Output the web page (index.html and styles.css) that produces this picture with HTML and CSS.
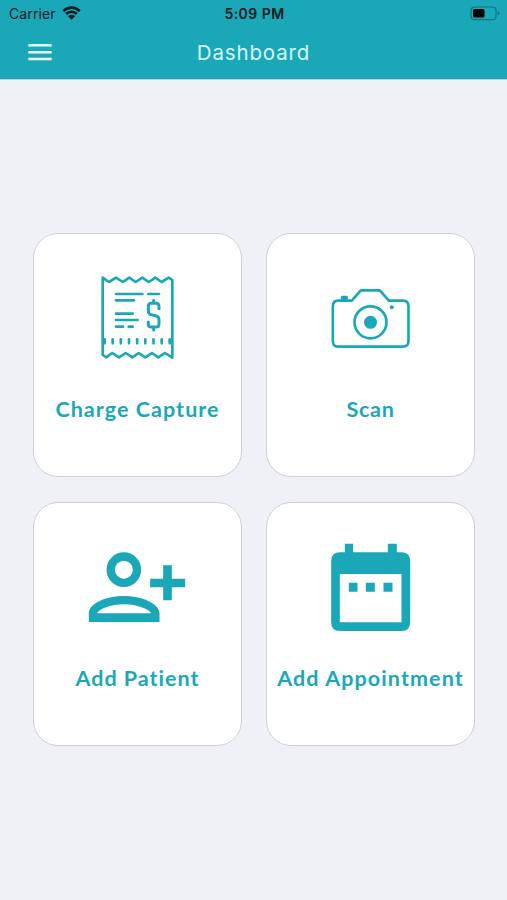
FILE: index.html
```html
<!DOCTYPE html>
<html lang="en">
<head>
    <meta charset="UTF-8">
    <meta name="viewport" content="width=device-width, initial-scale=1.0">
    <title>Dashboard</title>
    <link rel="stylesheet" href="styles.css">
</head>
<body>
    <header class="header">
        <div class="status-bar">
            <div class="carrier">
                <span class="carrier-name">Carrier</span>
                <svg class="wifi" viewBox="0 0 20 15">
                    <path d="M1.2 5.4a12.3 12.3 0 0 1 17.6 0M4.2 8.6a8.2 8.2 0 0 1 11.6 0" fill="none" stroke="#04191b" stroke-width="2.8"/>
                    <path d="M10 14.6L6.3 10.9a5.3 5.3 0 0 1 7.4 0z" fill="#04191b"/>
                </svg>
            </div>
            <span class="time">5:09 PM</span>
            <svg class="battery" viewBox="0 0 30 15">
                <rect x="1" y="1" width="25" height="12.6" rx="3.5" fill="none" stroke="#117580" stroke-width="1.2"/>
                <rect x="3" y="3" width="11.5" height="8.6" rx="1.5" fill="#000"/>
                <path d="M27.6 5v4.6q1.8-.7 1.8-2.3T27.6 5z" fill="#117580"/>
            </svg>
        </div>
        <div class="nav-bar">
            <svg class="menu" viewBox="0 0 24 17">
                <path d="M.3 1.3h23.4M.3 8.3h23.4M.3 15h23.4" stroke="#e8fdff" stroke-width="2.4"/>
            </svg>
            <h1 class="title">Dashboard</h1>
        </div>
    </header>

    <main class="grid">
        <div class="card">
            <svg class="icon" viewBox="-36 0 360 315">
                <g fill="none" stroke="#1aa8b9" stroke-width="8" stroke-linecap="round" stroke-linejoin="round">
                    <path d="M38 38L57 51 78 38 98 51 118 38 137 51 157 38 176 51 196 38 215 51 236 38 247 45V278L225 264 205 277 186 264 166 277 146 264 127 277 107 264 87 277 67 264 48 277 38 269z"/>
                    <path d="M78 87h79M175 87h32M78 106h54M78 146h50M78 165h65M78 185h21M116 185h12"/>
                    <path d="M207 131v-6q0-10-8-10h-16q-8 0-8 10v13q0 9 8 11l16 4q8 2 8 11v12q0 10-8 10h-16q-8 0-8-10v-5M191 106v8M191 187v8" stroke-width="9"/>
                </g>
                <path d="M44 223v12M68 223v12M92.5 223v12M117 223v12M141.5 223v12M166 223v12M190.5 223v12M215 223v12M239 223v12" stroke="#1aa8b9" stroke-width="8" stroke-linecap="round"/>
            </svg>
            <span class="label charge">Charge Capture</span>
        </div>
        <div class="card">
            <svg class="icon" viewBox="-26.5 -45 360 315">
                <g fill="none" stroke="#1aa8b9" stroke-width="8" stroke-linejoin="round">
                    <path d="M54 62h42l27-31h57l27 31h42q17 0 17 17v104q0 17-17 17H54q-15 0-15-17V79q0-17 15-17z"/>
                    <circle cx="152" cy="127" r="48"/>
                </g>
                <circle cx="152" cy="127" r="19.5" fill="#1aa8b9"/>
                <path d="M63 60v-9q0-4 4-4h13q4 0 4 4v9z" fill="#1aa8b9"/>
                <circle cx="216" cy="82" r="6" fill="#1aa8b9"/>
            </svg>
            <span class="label scan">Scan</span>
        </div>
        <div class="card">
            <svg class="icon" viewBox="-5.5 -18 360 315">
                <circle cx="132" cy="89" r="39.5" fill="none" stroke="#1aa8b9" stroke-width="25"/>
                <path d="M27 246v-26c0-30 52-52 105-52s107 22 107 52v26zM52 220h162c-8-13-42-27-82-27s-74 14-80 27z" fill="#1aa8b9" fill-rule="evenodd"/>
                <path d="M263 76v105M211 129h105" stroke="#1aa8b9" stroke-width="26"/>
            </svg>
            <span class="label patient">Add Patient</span>
        </div>
        <div class="card">
            <svg class="icon" viewBox="-26.5 -3 360 315">
                <path d="M75 26h25v26h104V26h27v26h14q26 0 26 26v184q0 26-26 26H60q-26 0-26-26V78q0-26 26-26h15zM60 117v145h185V117z" fill="#1aa8b9" fill-rule="evenodd"/>
                <path d="M87 143h26v27H87zM138 143h27v27h-27zM191 143h27v27h-27z" fill="#1aa8b9"/>
            </svg>
            <span class="label appointment">Add Appointment</span>
        </div>
    </main>
</body>
</html>
```
FILE: styles.css
```css
body {
    margin: 0;
    min-height: 900px;
    background-color: #eff1f7;
    font-family: Lato, sans-serif;
}
.header {
    height: 80px;
    box-sizing: border-box;
    background-color: #1aa8b9;
    border-bottom: 1px solid #a5dce5;
}
.status-bar {
    display: grid;
    grid-template-columns: 1fr auto 1fr;
    align-items: center;
    height: 27px;
    padding: 0 7px 0 9px;
    color: #04191b;
    font-family: Inter, sans-serif;
    font-size: 14px;
}
.carrier {
    display: flex;
    align-items: center;
    gap: 6px;
}
.carrier-name {
    letter-spacing: 0.1px;
}
.wifi {
    width: 19px;
    height: 14px;
    margin-top: -2px;
}
.time {
    font-weight: 600;
    letter-spacing: 0.45px;
}
.battery {
    width: 30px;
    height: 15px;
    justify-self: end;
}
.nav-bar {
    display: grid;
    grid-template-columns: 1fr auto 1fr;
    align-items: center;
    height: 50px;
    padding: 0 28px;
}
.menu {
    width: 24px;
    height: 17px;
}
.title {
    margin: 0;
    color: #d6f6f9;
    font-family: Inter, sans-serif;
    font-size: 20.5px;
    font-weight: 400;
    letter-spacing: 0.85px;
}
.grid {
    display: grid;
    grid-template-columns: 209px 209px;
    grid-auto-rows: 244px;
    gap: 25px 24px;
    padding: 153px 0 0 33px;
}
.card {
    display: flex;
    flex-direction: column;
    align-items: center;
    box-sizing: border-box;
    padding-top: 31px;
    background-color: #fff;
    border: 1.5px solid #cfcfda;
    border-radius: 25px;
}
.icon {
    width: 120px;
    height: 105px;
}
.label {
    margin-top: 25.5px;
    color: #1aa8b9;
    font-size: 21.5px;
    font-weight: 700;
    line-height: 26px;
    white-space: nowrap;
}
.charge {
    letter-spacing: 1.05px;
}
.scan {
    letter-spacing: 0.7px;
}
.patient {
    letter-spacing: 1px;
}
.appointment {
    letter-spacing: 1.1px;
}
```
